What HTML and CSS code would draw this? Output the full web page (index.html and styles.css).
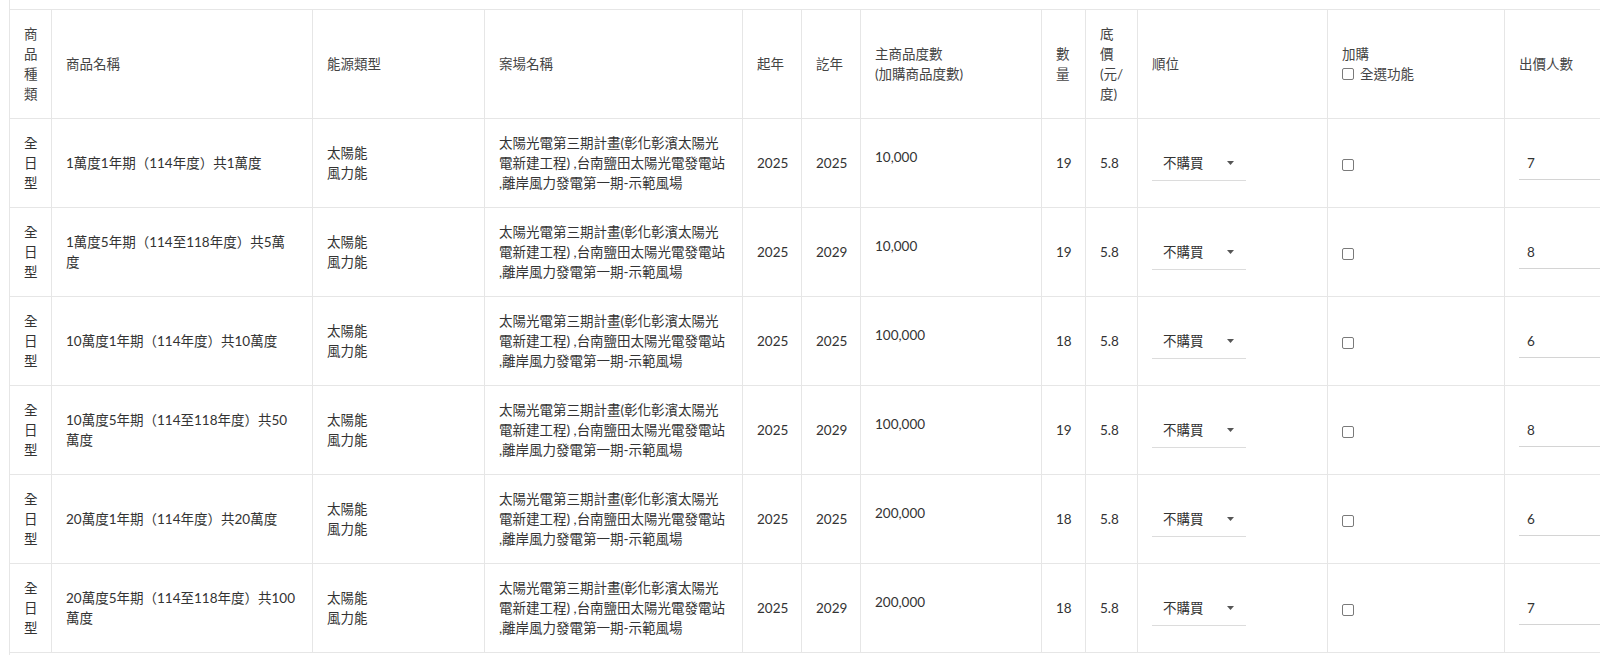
FILE: index.html
```html
<!DOCTYPE html>
<html lang="zh-Hant">
<head>
<meta charset="utf-8">
<title>商品列表</title>
<link rel="stylesheet" href="styles.css">
</head>
<body>
<div class="wrap">
<table class="grid">
<colgroup>
<col class="c-type"><col class="c-name"><col class="c-energy"><col class="c-site"><col class="c-year"><col class="c-year"><col class="c-kwh"><col class="c-qty"><col class="c-price"><col class="c-rank"><col class="c-add"><col class="c-bid">
</colgroup>
<thead>
<tr>
<th>商品種類</th>
<th>商品名稱</th>
<th>能源類型</th>
<th>案場名稱</th>
<th>起年</th>
<th>訖年</th>
<th>主商品度數<br>(加購商品度數)</th>
<th>數量</th>
<th>底價(元/度)</th>
<th>順位</th>
<th>加購<br><label class="all"><input type="checkbox" class="cb"> 全選功能</label></th>
<th>出價人數</th>
</tr>
</thead>
<tbody>
<tr>
<td>全日型</td>
<td class="name">1萬度1年期（114年度）共1萬度</td>
<td>太陽能<br>風力能</td>
<td>太陽光電第三期計畫(彰化彰濱太陽光電新建工程) ,台南鹽田太陽光電發電站 ,離岸風力發電第一期-示範風場</td>
<td>2025</td>
<td>2025</td>
<td><div class="kwh">10,000</div></td>
<td>19</td>
<td>5.8</td>
<td><div class="select"><span>不購買</span><svg width="7" height="4" viewBox="0 0 7 4"><path d="M0 0h7L3.5 4z" fill="#555"/></svg></div></td>
<td><input type="checkbox" class="cb"></td>
<td><input type="text" class="num" value="7"></td>
</tr>
<tr>
<td>全日型</td>
<td class="name">1萬度5年期（114至118年度）共5萬度</td>
<td>太陽能<br>風力能</td>
<td>太陽光電第三期計畫(彰化彰濱太陽光電新建工程) ,台南鹽田太陽光電發電站 ,離岸風力發電第一期-示範風場</td>
<td>2025</td>
<td>2029</td>
<td><div class="kwh">10,000</div></td>
<td>19</td>
<td>5.8</td>
<td><div class="select"><span>不購買</span><svg width="7" height="4" viewBox="0 0 7 4"><path d="M0 0h7L3.5 4z" fill="#555"/></svg></div></td>
<td><input type="checkbox" class="cb"></td>
<td><input type="text" class="num" value="8"></td>
</tr>
<tr>
<td>全日型</td>
<td class="name">10萬度1年期（114年度）共10萬度</td>
<td>太陽能<br>風力能</td>
<td>太陽光電第三期計畫(彰化彰濱太陽光電新建工程) ,台南鹽田太陽光電發電站 ,離岸風力發電第一期-示範風場</td>
<td>2025</td>
<td>2025</td>
<td><div class="kwh">100,000</div></td>
<td>18</td>
<td>5.8</td>
<td><div class="select"><span>不購買</span><svg width="7" height="4" viewBox="0 0 7 4"><path d="M0 0h7L3.5 4z" fill="#555"/></svg></div></td>
<td><input type="checkbox" class="cb"></td>
<td><input type="text" class="num" value="6"></td>
</tr>
<tr>
<td>全日型</td>
<td class="name">10萬度5年期（114至118年度）共50萬度</td>
<td>太陽能<br>風力能</td>
<td>太陽光電第三期計畫(彰化彰濱太陽光電新建工程) ,台南鹽田太陽光電發電站 ,離岸風力發電第一期-示範風場</td>
<td>2025</td>
<td>2029</td>
<td><div class="kwh">100,000</div></td>
<td>19</td>
<td>5.8</td>
<td><div class="select"><span>不購買</span><svg width="7" height="4" viewBox="0 0 7 4"><path d="M0 0h7L3.5 4z" fill="#555"/></svg></div></td>
<td><input type="checkbox" class="cb"></td>
<td><input type="text" class="num" value="8"></td>
</tr>
<tr>
<td>全日型</td>
<td class="name">20萬度1年期（114年度）共20萬度</td>
<td>太陽能<br>風力能</td>
<td>太陽光電第三期計畫(彰化彰濱太陽光電新建工程) ,台南鹽田太陽光電發電站 ,離岸風力發電第一期-示範風場</td>
<td>2025</td>
<td>2025</td>
<td><div class="kwh">200,000</div></td>
<td>18</td>
<td>5.8</td>
<td><div class="select"><span>不購買</span><svg width="7" height="4" viewBox="0 0 7 4"><path d="M0 0h7L3.5 4z" fill="#555"/></svg></div></td>
<td><input type="checkbox" class="cb"></td>
<td><input type="text" class="num" value="6"></td>
</tr>
<tr>
<td>全日型</td>
<td class="name">20萬度5年期（114至118年度）共100萬度</td>
<td>太陽能<br>風力能</td>
<td>太陽光電第三期計畫(彰化彰濱太陽光電新建工程) ,台南鹽田太陽光電發電站 ,離岸風力發電第一期-示範風場</td>
<td>2025</td>
<td>2029</td>
<td><div class="kwh">200,000</div></td>
<td>18</td>
<td>5.8</td>
<td><div class="select"><span>不購買</span><svg width="7" height="4" viewBox="0 0 7 4"><path d="M0 0h7L3.5 4z" fill="#555"/></svg></div></td>
<td><input type="checkbox" class="cb"></td>
<td><input type="text" class="num" value="7"></td>
</tr>
</tbody>
</table>
</div>
</body>
</html>
```
FILE: styles.css
```css
* { box-sizing: border-box; }
html, body {
  margin: 0;
  padding: 0;
  background: #fff;
  overflow: hidden;
}
body {
  font-family: Lato, "Noto Sans CJK TC", sans-serif;
  font-size: 13.5px;
  line-height: 20px;
  color: #333;
}
.wrap {
  margin-left: 9px;
  border-left: 1px solid #e6e6e6;
  padding-top: 9px;
  height: 100vh;
  overflow: hidden;
}
.grid {
  table-layout: fixed;
  border-collapse: separate;
  border-spacing: 0;
  width: 1695px;
  border-top: 1px solid #e6e6e6;
}
.c-type { width: 42px; }
.c-name { width: 261px; }
.c-energy { width: 172px; }
.c-site { width: 258px; }
.c-year { width: 59px; }
.c-kwh { width: 181px; }
.c-qty { width: 44px; }
.c-price { width: 52px; }
.c-rank { width: 190px; }
.c-add { width: 177px; }
.c-bid { width: 200px; }
.grid th,
.grid td {
  padding: 14px 14px;
  text-align: left;
  vertical-align: middle;
  font-weight: normal;
  border-right: 1px solid #e6e6e6;
  border-bottom: 1px solid #e6e6e6;
  word-break: normal;
}
.grid th { color: #444; }
.grid td.name { padding-right: 15px; }
.kwh { margin-bottom: 12px; }
.all {
  display: inline-flex;
  align-items: center;
  gap: 6px;
}
.cb {
  appearance: none;
  -webkit-appearance: none;
  width: 12px;
  height: 12px;
  margin: 0;
  border: 1px solid #7a7a7a;
  border-radius: 2px;
  background: #fff;
  vertical-align: middle;
  display: inline-block;
}
.select {
  display: flex;
  align-items: center;
  justify-content: space-between;
  width: 94px;
  height: 36px;
  padding: 0 12px 0 11px;
  border-bottom: 1px solid #dcdcdc;
  color: #333;
}
.num {
  display: block;
  width: 180px;
  height: 34px;
  margin: 0;
  padding: 0 0 0 8px;
  border: none;
  border-bottom: 1px solid #d4d4d4;
  outline: none;
  font: inherit;
  color: #333;
  background: transparent;
}
```
